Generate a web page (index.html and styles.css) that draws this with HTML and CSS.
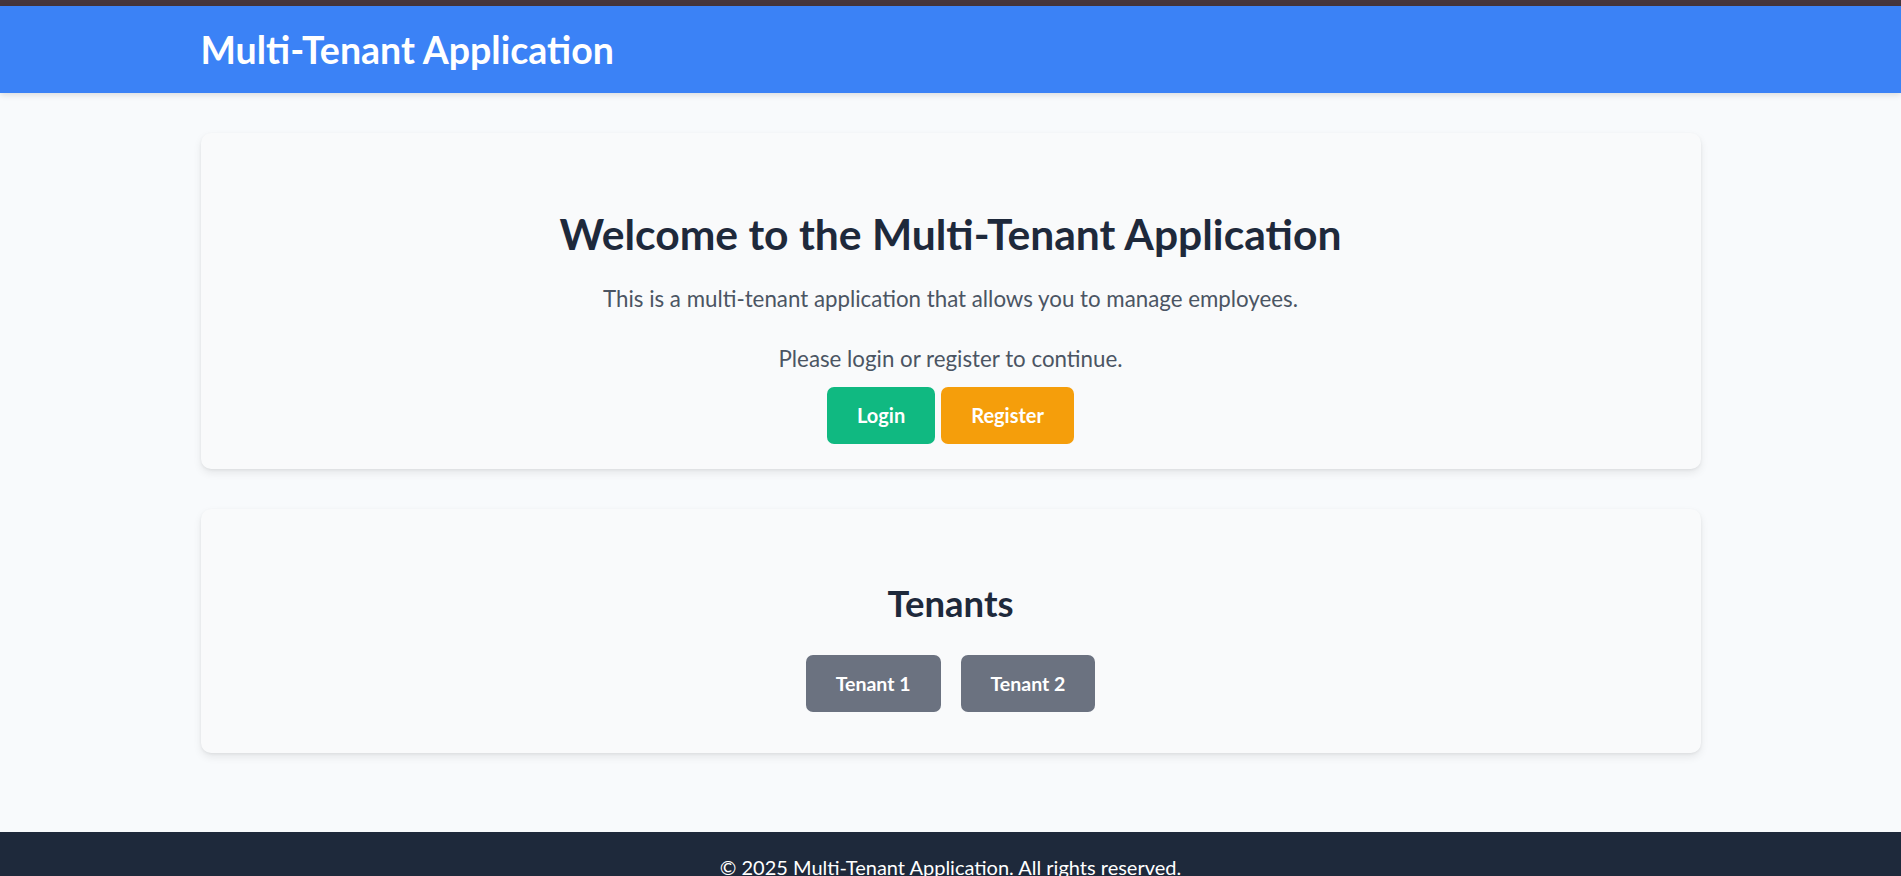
FILE: index.html
```html
<!DOCTYPE html>
<html lang="en">
<head>
<meta charset="utf-8">
<title>Multi-Tenant Application</title>
<link rel="stylesheet" href="styles.css">
</head>
<body>
<div class="top-strip"></div>
<header class="site-header">
  <div class="container header-inner">
    <h1 class="brand">Multi-Tenant Application</h1>
  </div>
</header>
<main class="container main">
  <section class="card card-welcome">
    <h2 class="card-title welcome-title">Welcome to the Multi-Tenant Application</h2>
    <p class="lead">This is a multi-tenant application that allows you to manage employees.</p>
    <p class="lead lead-second">Please login or register to continue.</p>
    <div class="actions">
      <a class="btn btn-login" href="#">Login</a>
      <a class="btn btn-register" href="#">Register</a>
    </div>
  </section>
  <section class="card card-tenants">
    <h2 class="card-title tenants-title">Tenants</h2>
    <div class="tenant-list">
      <a class="btn btn-tenant" href="#">Tenant 1</a>
      <a class="btn btn-tenant" href="#">Tenant 2</a>
    </div>
  </section>
</main>
<footer class="site-footer">
  <p class="footer-text">© 2025 Multi-Tenant Application. All rights reserved.</p>
</footer>
</body>
</html>
```
FILE: styles.css
```css
* { box-sizing: border-box; }
html, body { margin: 0; padding: 0; }
body {
  background: #f8fafc;
  font-family: Lato, "Open Sans", sans-serif;
  color: #1e293b;
}
.top-strip { height: 6px; background: #46363b; }
.container { max-width: 1500px; margin: 0 auto; }
.site-header {
  background: #3b82f6;
  height: 87px;
  box-shadow: 0 2px 6px rgba(0,0,0,0.12);
  position: relative;
}
.header-inner { height: 100%; display: flex; align-items: center; }
.brand { margin: 0; color: #fff; font-size: 37.5px; font-weight: 700; line-height: 48px; }
.main { padding: 40px 0 79px; display: flex; flex-direction: column; gap: 40px; }
.card {
  background: #f9fafb;
  border-radius: 10px;
  box-shadow: 0 4px 8px rgba(0,0,0,0.08), 0 1px 3px rgba(0,0,0,0.06);
  padding: 25px 40px;
  text-align: center;
}
.card-title { margin: 0; font-weight: 700; color: #1e293b; }
.welcome-title { font-size: 42.6px; line-height: 56px; margin: 48px 0 19px; }
.lead { margin: 0; font-size: 22.3px; line-height: 36px; color: #4b5563; }
.lead-second { margin-top: 24px; }
.actions { margin-top: 10px; display: flex; justify-content: center; gap: 6px; }
.btn {
  display: inline-block;
  padding: 14px 30px;
  font-size: 20px;
  line-height: 29px;
  font-weight: 700;
  color: #fff;
  text-decoration: none;
  border-radius: 7px;
}
.btn-login { background: #10b981; }
.btn-register { background: #f59e0b; }
.tenants-title { font-size: 36.5px; line-height: 48px; margin: 45px 0 0; }
.tenant-list { margin: 28px 0 16px; display: flex; justify-content: center; gap: 20px; }
.btn-tenant { background: #6b7280; font-size: 19.5px; }
.site-footer { background: #1e293b; padding: 20px 0; text-align: center; }
.footer-text { margin: 0; color: #fff; font-size: 20px; line-height: 30px; }
```
